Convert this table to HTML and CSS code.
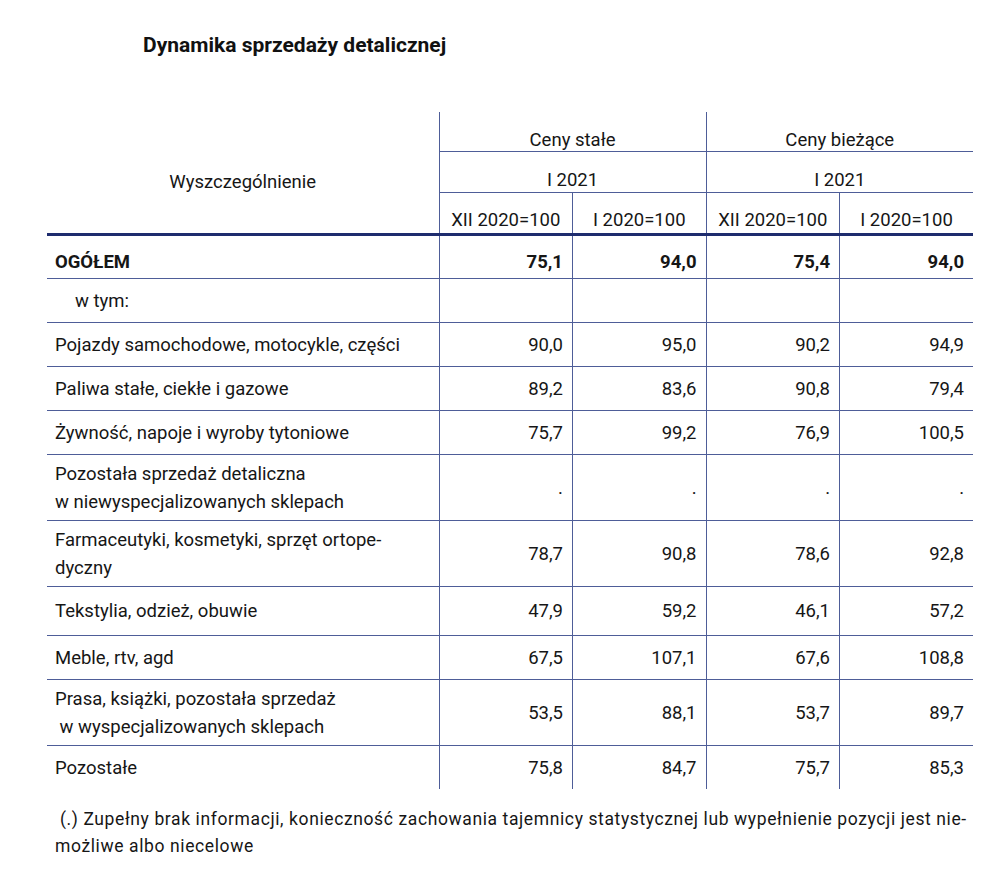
FILE: index.html
```html
<!DOCTYPE html>
<html lang="pl">
<head>
<meta charset="utf-8">
<title>Dynamika sprzedaży detalicznej</title>
<link rel="stylesheet" href="styles.css">
</head>
<body>
<div class="page">
  <h1 class="title">Dynamika sprzedaży detalicznej</h1>
  <table class="tbl">
    <colgroup>
      <col class="c-label">
      <col class="c-num">
      <col class="c-num">
      <col class="c-num">
      <col class="c-num">
    </colgroup>
    <thead>
      <tr class="h1">
        <th rowspan="3" class="label-head">Wyszczególnienie</th>
        <th colspan="2" class="grp">Ceny stałe</th>
        <th colspan="2" class="grp">Ceny bieżące</th>
      </tr>
      <tr class="h2">
        <th colspan="2" class="grp">I 2021</th>
        <th colspan="2" class="grp">I 2021</th>
      </tr>
      <tr class="h3">
        <th class="sub">XII 2020=100</th>
        <th class="sub">I 2020=100</th>
        <th class="sub">XII 2020=100</th>
        <th class="sub">I 2020=100</th>
      </tr>
    </thead>
    <tbody>
      <tr class="r total">
        <td class="lbl">OGÓŁEM</td>
        <td class="num">75,1</td><td class="num">94,0</td><td class="num">75,4</td><td class="num">94,0</td>
      </tr>
      <tr class="r">
        <td class="lbl indent">w tym:</td>
        <td class="num"></td><td class="num"></td><td class="num"></td><td class="num"></td>
      </tr>
      <tr class="r">
        <td class="lbl">Pojazdy samochodowe, motocykle, części</td>
        <td class="num">90,0</td><td class="num">95,0</td><td class="num">90,2</td><td class="num">94,9</td>
      </tr>
      <tr class="r">
        <td class="lbl">Paliwa stałe, ciekłe i gazowe</td>
        <td class="num">89,2</td><td class="num">83,6</td><td class="num">90,8</td><td class="num">79,4</td>
      </tr>
      <tr class="r">
        <td class="lbl">Żywność, napoje i wyroby tytoniowe</td>
        <td class="num">75,7</td><td class="num">99,2</td><td class="num">76,9</td><td class="num">100,5</td>
      </tr>
      <tr class="r two">
        <td class="lbl">Pozostała sprzedaż detaliczna<br>w niewyspecjalizowanych sklepach</td>
        <td class="num">.</td><td class="num">.</td><td class="num">.</td><td class="num">.</td>
      </tr>
      <tr class="r two">
        <td class="lbl">Farmaceutyki, kosmetyki, sprzęt ortope-<br>dyczny</td>
        <td class="num">78,7</td><td class="num">90,8</td><td class="num">78,6</td><td class="num">92,8</td>
      </tr>
      <tr class="r tall">
        <td class="lbl">Tekstylia, odzież, obuwie</td>
        <td class="num">47,9</td><td class="num">59,2</td><td class="num">46,1</td><td class="num">57,2</td>
      </tr>
      <tr class="r">
        <td class="lbl">Meble, rtv, agd</td>
        <td class="num">67,5</td><td class="num">107,1</td><td class="num">67,6</td><td class="num">108,8</td>
      </tr>
      <tr class="r two">
        <td class="lbl">Prasa, książki, pozostała sprzedaż<br>&nbsp;w wyspecjalizowanych sklepach</td>
        <td class="num">53,5</td><td class="num">88,1</td><td class="num">53,7</td><td class="num">89,7</td>
      </tr>
      <tr class="r last">
        <td class="lbl">Pozostałe</td>
        <td class="num">75,8</td><td class="num">84,7</td><td class="num">75,7</td><td class="num">85,3</td>
      </tr>
    </tbody>
  </table>
  <p class="note">&nbsp;(.) Zupełny brak informacji, konieczność zachowania tajemnicy statystycznej lub wypełnienie pozycji jest nie-<br>możliwe albo niecelowe</p>
</div>
</body>
</html>
```

FILE: styles.css
```css
html, body {
  margin: 0;
  padding: 0;
  background: #ffffff;
}

body {
  font-family: Roboto, "Noto Sans", sans-serif;
  color: #161616;
}

.page {
  padding: 32px 0 0 47px;
}

.title {
  margin: 0 0 0 96px;
  font-size: 21px;
  font-weight: 700;
  line-height: 26px;
  color: #111111;
}

.tbl {
  margin-top: 54px;
  border-collapse: collapse;
  table-layout: fixed;
  width: 926px;
  font-size: 18.5px;
}

.c-label { width: 392px; }
.c-num { width: 133.5px; }

.tbl th {
  font-weight: 400;
  padding: 0;
  line-height: 22px;
}

.label-head {
  text-align: center;
  vertical-align: middle;
  padding-top: 18px !important;
  border-bottom: 3px solid #1e2c6e;
}

.grp {
  text-align: center;
  border-left: 1px solid #4e5d98;
  border-bottom: 1px solid #4e5d98;
  vertical-align: bottom;
}

.h1 .grp {
  height: 39px;
  padding-bottom: 0 !important;
}

.h2 .grp {
  height: 39px;
  padding-bottom: 1px !important;
}

.sub {
  text-align: center;
  border-left: 1px solid #4e5d98;
  border-bottom: 3px solid #1e2c6e;
  vertical-align: bottom;
  height: 38px;
  padding-bottom: 2px !important;
}

.r td {
  height: 43px;
  padding: 0 9px 0 8px;
  border-bottom: 1px solid #4e5d98;
  vertical-align: middle;
  line-height: 28px;
}

.r.two td {
  height: 65px;
}

.r.tall td {
  height: 48px;
}

.r.last td {
  border-bottom: none;
}

.r .num {
  text-align: right;
  border-left: 1px solid #4e5d98;
}

.r .lbl {
  text-align: left;
}

.r .indent {
  padding-left: 28px;
}

.r.total td {
  font-weight: 700;
  height: 33px;
  padding-top: 9px;
}

.note {
  margin: 17px 0 0 8px;
  font-size: 17.5px;
  line-height: 27px;
  letter-spacing: 0.61px;
  color: #161616;
}
```
